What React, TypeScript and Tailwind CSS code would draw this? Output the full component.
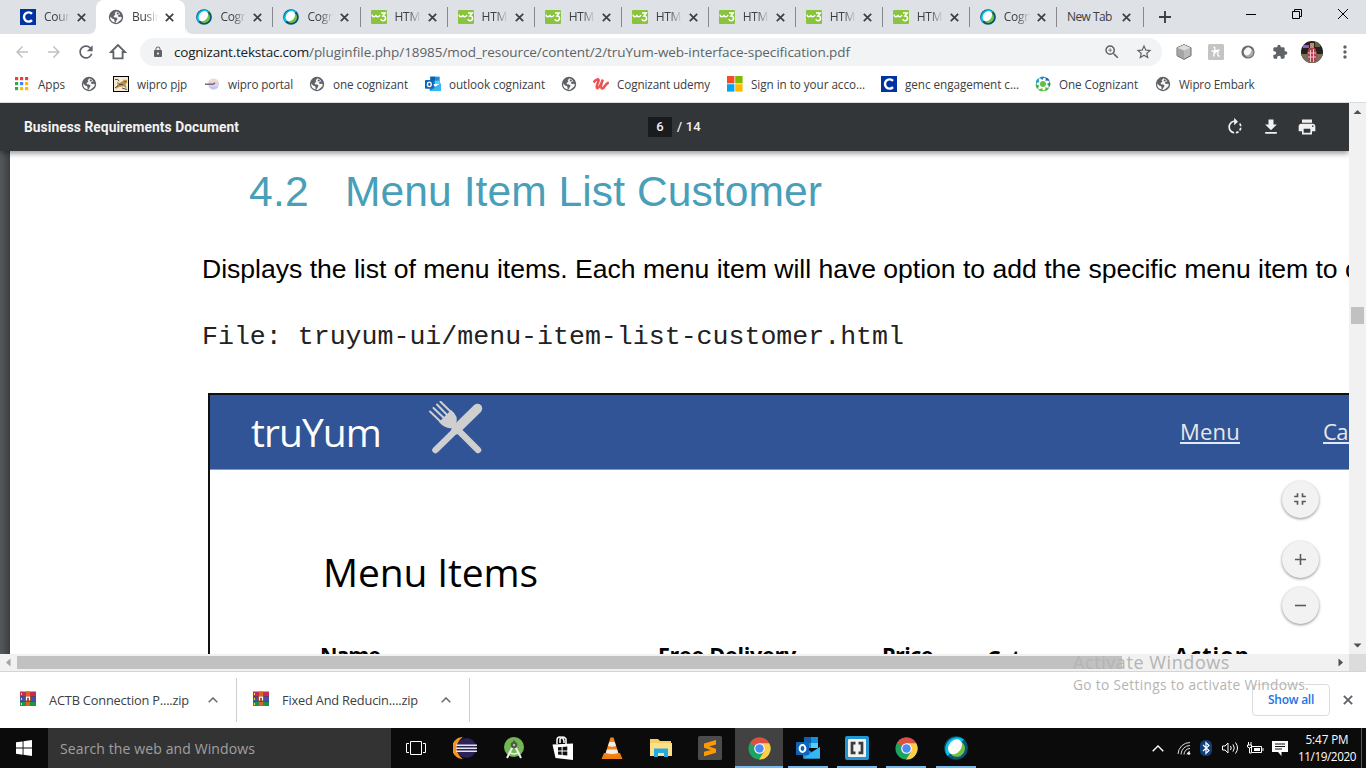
import React, { useLayoutEffect, useRef, useState } from "react";
import {
  MdAdd,
  MdArrowBack,
  MdArrowForward,
  MdExtension,
  MdFileDownload,
  MdFullscreenExit,
  MdLock,
  MdMoreVert,
  MdPrint,
  MdRefresh,
  MdRemove,
  MdRotateRight,
  MdStarBorder,
  MdZoomIn,
} from "react-icons/md";

/** A single line of text whose tracking is adjusted so that it spans `w` pixels. */
function Fit({ w, className = "", children }: { w: number; className?: string; children: string }) {
  const ref = useRef<HTMLSpanElement>(null);
  const [spacing, setSpacing] = useState(0);
  useLayoutEffect(() => {
    if (ref.current) setSpacing((w - ref.current.getBoundingClientRect().width) / children.length);
  }, []);
  return (
    <span ref={ref} className={`inline-block whitespace-pre ${className}`} style={{ letterSpacing: `${spacing}px` }}>
      {children}
    </span>
  );
}

const CIcon = () => (
  <svg viewBox="0 0 16 16" className="size-4">
    <rect width="16" height="16" fill="#0033a0" />
    <path d="M12 4.9A4.6 4.6 0 1 0 12 11.1" fill="none" stroke="#fff" strokeWidth="2.4" />
  </svg>
);

const Globe = () => (
  <svg viewBox="0 0 16 16" className="size-4">
    <circle cx="8" cy="8" r="7.2" fill="#5f6368" />
    <path d="M8.6 2.3 6.6 4.2 7.4 5.4 5.8 6.9 5.7 8.3 8.3 8.5 9.6 9.8 8.4 11.8 7.2 13.9 9.4 13.7 13.2 10.4 13.9 8.4 12.7 7.7 11 8.1 9.8 6.9 10.6 5.8 12.4 5.6 11.4 3.9Z" fill="#fff" opacity=".95" />
    <path d="M2.1 7.6 4.1 9.4 6.3 10.5 6.7 13.6A6 6 0 0 1 2.1 7.6Z" fill="#fff" />
    <path d="M9 3.2 12.4 5.4 11 5.1 9.6 5.6 8.6 5Z" fill="#5f6368" />
  </svg>
);

const Swirl = ({ className = "size-4" }: { className?: string }) => (
  <svg viewBox="0 0 24 24" className={className}>
    <circle cx="12" cy="12" r="11.8" fill="#07567a" />
    <path d="M3.5 20A11.8 11.8 0 0 1 20 3.5L12 12Z" fill="#05bfe8" />
    <ellipse cx="13" cy="12.7" rx="7.8" ry="8.3" fill="#75c043" transform="rotate(35 13 12.7)" />
    <ellipse cx="11" cy="10.7" rx="6.2" ry="8.2" fill="#fff" transform="rotate(38 11 10.7)" />
  </svg>
);

const W3 = () => (
  <svg viewBox="0 0 16 16" className="size-4">
    <rect y="1" width="16" height="14" rx="1" fill="#8ac43f" />
    <path d="M1 5.6q.4 2.4 2 2.2T4.8 6q.5 2 2 1.8T9 6" fill="none" stroke="#fff" strokeWidth="1.4" />
    <path d="M10 4h4.2l-2.3 3q2.6-.1 2.6 2.3t-2.4 2.4q-1.8 0-2.2-1.6" fill="none" stroke="#fff" strokeWidth="1.5" />
  </svg>
);

const Cross = ({ className = "size-[9px]" }: { className?: string }) => (
  <svg viewBox="0 0 9 9" className={className}>
    <path d="M.8.8 8.2 8.2M8.2.8.8 8.2" stroke="currentColor" strokeWidth="1.7" />
  </svg>
);

const Outlook = ({ className = "size-4" }: { className?: string }) => (
  <svg viewBox="0 0 24 24" className={className}>
    <path d="M8 1h14v11H8z" fill="#1490df" />
    <path d="M8 1h7v6H8z" fill="#0f5fb0" />
    <path d="M15 7h7v5h-7z" fill="#50d0f5" />
    <path d="M7 10l8.5 6L24 11v10.5q0 1-1 1H8q-1 0-1-1z" fill="#1b8fe0" />
    <path d="M7 22.5 24 11v11.5z" fill="#35b8f1" />
    <rect y="6" width="13" height="13" rx="1" fill="#0f64b8" />
    <ellipse cx="6.5" cy="12.5" rx="2.9" ry="3.4" fill="none" stroke="#fff" strokeWidth="2" />
  </svg>
);

const Tomcat = () => (
  <svg viewBox="0 0 16 16" className="size-4">
    <rect x=".5" y=".5" width="15" height="15" fill="#f4ead6" stroke="#000" />
    <path d="M4 5.5 6 7 10 5 11 3.2 12 4.4 14 3.4 14.2 6.8 12.5 8 13.6 12.5 10.5 10.2 6 11 2.5 13 4.6 9.6Z" fill="#b98f45" />
    <path d="M2 3.5 4.8 3.4 6 5.2M2 12l3-2.5M9 12l5 1.5M11.5 5.4h1.5M6 8.5h4" stroke="#514e4a" fill="none" />
  </svg>
);

const WiproPortal = () => (
  <svg viewBox="0 0 16 16" className="size-4">
    <circle cx="9.5" cy="8" r="5.5" fill="#ddd3e6" />
    <path d="M5 5.5A5.5 5.5 0 0 1 14.5 5.8Z" fill="#f3dcc8" />
    <path d="M5 11A5.5 5.5 0 0 0 14.4 10.5Z" fill="#bcc9ea" />
    <path d="M1 8.3h8l2-1.4" stroke="#77678b" strokeWidth="1.5" fill="none" />
  </svg>
);

const Udemy = () => (
  <svg viewBox="0 0 16 16" className="size-4">
    <path d="M.5 6.5Q3 3.2 5 3.2 6.3 3.5 5 6.4 2.8 11.6 4.2 12.2 6.5 12.4 9.8 3.6 7 11.8 9 12.5 10.5 12.8 11.5 10.5 13.8 7.4 15.8 6.5" fill="none" stroke="#ec5252" strokeWidth="2.5" />
  </svg>
);

const Microsoft = () => (
  <svg viewBox="0 0 16 16" className="size-4">
    <path d="M0 0h7.4v7.4H0z" fill="#f25022" />
    <path d="M8.2 0h7.4v7.4H8.2z" fill="#7fba00" />
    <path d="M0 8.2h7.4v7.4H0z" fill="#00a4ef" />
    <path d="M8.2 8.2h7.4v7.4H8.2z" fill="#ffb900" />
  </svg>
);

const OneCognizant = () => (
  <svg viewBox="0 0 16 16" className="size-4">
    <circle cx="8" cy="8" r="3" fill="#66bf3f" />
    {["#2188c9", "#1c61a8", "#1d9a87", "#4cb848", "#5cbf43", "#3fae49", "#1fa2c4"].map((c, i) => (
      <path key={c} d="M3.8 2.4Q7-1 10.6 1.6 7.8 1.6 7.2 4.2 6 2 3.8 2.4Z" fill={c} transform={`rotate(${i * 51.4} 8 8)`} />
    ))}
  </svg>
);

const Apps = () => (
  <svg viewBox="0 0 16 16" className="size-4">
    {["#ea4335", "#ea4335", "#ea4335", "#34a853", "#4285f4", "#fbbc04", "#34a853", "#fbbc04", "#fbbc04"].map((c, i) => (
      <rect key={i} x={1 + (i % 3) * 5} y={1 + Math.floor(i / 3) * 5} width="3.2" height="3.2" fill={c} />
    ))}
  </svg>
);

const Chrome = () => (
  <svg viewBox="0 0 24 24" className="size-[23px]">
    <circle cx="12" cy="12" r="11.5" fill="#1da462" />
    <path d="M12 12 2 6.3A11.5 11.5 0 0 1 22 6.3Z" fill="#dd5144" />
    <path d="M12 6.4H22.1A11.5 11.5 0 0 1 11.6 23.5L16.9 14.8Z" fill="#ffcd46" />
    <circle cx="12" cy="12" r="5.5" fill="#fff" />
    <circle cx="12" cy="12" r="4.4" fill="#4c8bf5" />
  </svg>
);

const Rar = () => (
  <svg viewBox="0 0 16 16" className="size-4">
    <path d="M0 .5h16V5H0z" fill="#c62b54" />
    <path d="M0 5.5h16V10H0z" fill="#4b4bb5" />
    <path d="M0 10.5h16V15H0z" fill="#1c9446" />
    <path d="M0 5h16v.7H0zM0 10h16v.7H0z" fill="#332a30" />
    <path d="M6 .5h4V15H6z" fill="#d9661f" />
    <path d="M5 5h6v6H5z" fill="#9b3d22" />
    <path d="M6.5 9.6V6.2h3v3.4" fill="none" stroke="#fff" strokeWidth="1.2" />
    <path d="M1 2h1v2H1zM1 7h1v2H1zM1 12h1v2H1z" fill="#ffd94a" />
  </svg>
);

const ui = "font-['Open_Sans','Noto_Sans',sans-serif]";

type Tab = { icon: "c" | "globe" | "swirl" | "w3" | "none"; title: string };
const tabs: Tab[] = [
  { icon: "c", title: "Cour" },
  { icon: "globe", title: "Busin" },
  { icon: "swirl", title: "Cogn" },
  { icon: "swirl", title: "Cogn" },
  { icon: "w3", title: "HTM" },
  { icon: "w3", title: "HTM" },
  { icon: "w3", title: "HTM" },
  { icon: "w3", title: "HTM" },
  { icon: "w3", title: "HTM" },
  { icon: "w3", title: "HTM" },
  { icon: "w3", title: "HTM" },
  { icon: "swirl", title: "Cogn" },
  { icon: "none", title: "New Tab" },
];
const tabIcons = { c: <CIcon />, globe: <Globe />, swirl: <Swirl />, w3: <W3 />, none: null };

function TabStrip() {
  return (
    <div className="flex h-[34px] bg-[#dee1e6] pl-[9px] text-[12px] text-[#3c4043]">
      {tabs.map((t, i) => (
        <div
          key={i}
          className={`relative flex h-[34px] shrink-0 items-center ${i === 1 ? "w-[89.4px] rounded-t-lg bg-white pl-3" : "w-[87.05px] pl-[11px]"}`}
        >
          {i === 1 && (
            <svg viewBox="0 0 105.4 8" className="absolute bottom-0 -left-2 h-2 w-[105.4px]">
              <path d="M0 8q8 0 8-8v8zM105.4 8q-8 0-8-8v8z" fill="#fff" />
            </svg>
          )}
          {tabIcons[t.icon]}
          <span
            className={`overflow-hidden whitespace-nowrap tracking-[-0.3px] ${
              t.icon === "none" ? "w-[47px]" : "ml-2 w-[26px] [mask-image:linear-gradient(to_right,black_50%,transparent)]"
            }`}
          >
            {t.icon === "none" ? <Fit w={45}>{t.title}</Fit> : t.title}
          </span>
          <Cross className={t.icon === "none" ? "ml-[8px] size-[9px]" : "ml-[7px] size-[9px]"} />
          {i > 1 && <span className="-mr-px ml-auto h-5 w-px bg-[#85888d]" />}
        </div>
      ))}
      <svg viewBox="0 0 12 12" className="mt-[11px] ml-4 size-3">
        <path d="M6 0v12M0 6h12" stroke="#3c4043" strokeWidth="1.9" />
      </svg>
      <div className="ml-auto flex h-7 items-center gap-[36px] pr-[18px] text-black">
        <svg viewBox="0 0 10 10" className="size-[10px]"><path d="M0 5.5h10" stroke="currentColor" /></svg>
        <svg viewBox="0 0 10 10" className="size-[10px]"><path d="M.5 2.5h7v7h-7zM2.5 2.5v-2h7v7h-2" fill="none" stroke="currentColor" /></svg>
        <svg viewBox="0 0 10 10" className="size-[10px]"><path d="M0 0 10 10M10 0 0 10" stroke="currentColor" /></svg>
      </div>
    </div>
  );
}

function AddressBar() {
  return (
    <div className="flex h-9 items-center bg-white text-[#5f6368]">
      <MdArrowBack className="ml-[13px] size-[18px] text-[#bdc1c6]" />
      <MdArrowForward className="ml-[14px] size-[18px] text-[#bdc1c6]" />
      <MdRefresh className="ml-[13px] size-5" />
      <svg viewBox="0 0 18 18" className="ml-[13px] size-[18px]">
        <path d="M9 2 2 9h2.4v6.4h9.2V9H16Z" fill="none" stroke="currentColor" strokeWidth="1.8" />
      </svg>
      <div className="ml-[13px] flex h-7 w-[1022px] items-center rounded-full bg-[#f1f3f4]">
        <MdLock className="ml-3 size-3" />
        <span className="ml-[10px] flex text-[13.5px] leading-7">
          <Fit w={135} className="text-[#202124]">cognizant.tekstac.com</Fit>
          <Fit w={541}>/pluginfile.php/18985/mod_resource/content/2/truYum-web-interface-specification.pdf</Fit>
        </span>
        <MdZoomIn className="ml-auto size-[18px]" />
        <MdStarBorder className="mr-[9px] ml-[14px] size-[18px]" />
      </div>
      <svg viewBox="0 0 16 16" className="ml-[14px] size-4">
        <path d="M8 .6 15 3.7v8L8 15.4l-7-3.7v-8z" fill="#b9bbbd" stroke="#66686b" />
        <path d="M1.4 3.8 8 6.5v8.5l-6.6-3.5z" fill="#a3a5a7" />
        <path d="M8 .8 14.6 3.7 8 6.5 1.4 3.7Z" fill="#dcdddd" />
      </svg>
      <svg viewBox="0 0 16 16" className="ml-4 size-4">
        <rect width="16" height="16" rx="1.5" fill="#c4c4c4" />
        <path d="M5.4 3.4q1.8-1 1.4 2L5.6 12.6M3.6 7.3l8-1M6.2 9.8q2.8-4 3.7-1.7-.8 4.8 1.7 3.8" fill="none" stroke="#fff" strokeWidth="1.4" />
      </svg>
      <svg viewBox="0 0 16 16" className="ml-4 size-4">
        <circle cx="8" cy="8" r="6.6" fill="#6b6d70" />
        <ellipse cx="8.7" cy="8.8" rx="4.7" ry="4.7" fill="#a8aaac" />
        <ellipse cx="7.6" cy="7.4" rx="3.3" ry="4.2" fill="#f8f8f8" transform="rotate(38 7.6 7.4)" />
      </svg>
      <MdExtension className="ml-4 size-4" />
      <svg viewBox="0 0 22 22" className="ml-[13px] size-[22px]">
        <clipPath id="avatar"><circle cx="11" cy="11" r="11" /></clipPath>
        <g clipPath="url(#avatar)">
          <path d="M0 0h22v22H0z" fill="#25211c" />
          <path d="M0 13h22v9H0z" fill="#77705a" />
          <path d="M2 4h6v3H2z" fill="#8d62c8" />
          <path d="M14 1h5v5h-5z" fill="#5c6644" />
          <path d="M8 7h6l2 5-1 9H8L6 12z" fill="#b63d51" />
          <path d="M9 2h4v5H9z" fill="#c48a76" />
          <path d="M9.5 9v12M12.5 8v13M7 12h8M7 16h8" stroke="#e9c8cc" strokeWidth="1" />
        </g>
      </svg>
      <MdMoreVert className="ml-[12px] size-5" />
    </div>
  );
}

const bookmarks: { w: string; icon: React.ReactNode; label?: string; tw?: number }[] = [
  { w: "w-[67px]", icon: <Apps />, label: "Apps", tw: 27 },
  { w: "w-[32px]", icon: <Globe /> },
  { w: "w-[91px]", icon: <Tomcat />, label: "wipro pjp", tw: 50 },
  { w: "w-[105px]", icon: <WiproPortal />, label: "wipro portal", tw: 65 },
  { w: "w-[116px]", icon: <Globe />, label: "one cognizant", tw: 75 },
  { w: "w-[136px]", icon: <Outlook />, label: "outlook cognizant", tw: 96 },
  { w: "w-[32px]", icon: <Globe /> },
  { w: "w-[134px]", icon: <Udemy />, label: "Cognizant udemy", tw: 93 },
  { w: "w-[154px]", icon: <Microsoft />, label: "Sign in to your acco...", tw: 114 },
  { w: "w-[154px]", icon: <CIcon />, label: "genc engagement c...", tw: 114 },
  { w: "w-[120px]", icon: <OneCognizant />, label: "One Cognizant", tw: 79 },
  { w: "w-[110px]", icon: <Globe />, label: "Wipro Embark", tw: 75.5 },
];

function Bookmarks() {
  return (
    <div className="flex h-[33px] items-center border-b border-[#dadce0] bg-white pb-[5px] pl-[14px] text-[11.7px] text-[#3c4043]">
      {bookmarks.map((b, i) => (
        <div key={i} className={`flex shrink-0 items-center gap-2 ${b.w}`}>
          {b.icon}
          {b.label && <Fit w={b.tw!} className="leading-4">{b.label}</Fit>}
        </div>
      ))}
    </div>
  );
}

function PdfToolbar() {
  return (
    <div className="relative z-10 flex h-12 items-center bg-[#323639] font-[Roboto,sans-serif] text-[13.8px] font-bold text-[#f1f1f1] shadow-[0_2px_6px_rgba(0,0,0,0.45)]">
      <Fit w={215} className="ml-6">Business Requirements Document</Fit>
      <div className="ml-[409px] flex items-center text-[13px]">
        <span className="h-5 w-6 bg-[#191b1d] text-center leading-5 font-medium">6</span>
        <Fit w={24} className="ml-[5px] font-medium">/ 14</Fit>
      </div>
      <div className="mr-[32px] ml-auto flex gap-[16px]">
        <MdRotateRight className="size-5" />
        <MdFileDownload className="size-5" />
        <MdPrint className="size-5" />
      </div>
    </div>
  );
}

const CrossedCutlery = () => (
  <svg viewBox="0 0 56 56" className="ml-[47px] size-14">
    <g stroke="#cfcfcf" fill="none" strokeLinecap="round">
      <path d="M7.5 49 30 27" strokeWidth="6.5" />
      <path d="M28 28.5 49.5 7.5" strokeWidth="9.5" />
      <path d="M28 27 50 49" strokeWidth="6.5" />
      <path d="M2 10.5 14 22M5.5 7 18 19M9 3.5 21 16M12.5 .8 25 13" strokeWidth="2" />
    </g>
    <path d="M11 21 23 9Q31 15 28 23 L32 27 28 34 24 27Q17 28 11 21Z" fill="#cfcfcf" />
  </svg>
);

function DocumentPage() {
  return (
    <div className="flex min-h-0 flex-1 overflow-hidden bg-[linear-gradient(to_right,#525659_0,#525659_2px,#3b3e41_10px)]">
      <div className="ml-[10px] w-[1339px] shrink-0 overflow-hidden bg-white text-black">
        <h1 className="mt-[15px] flex h-[50px] pl-[239px] font-['Liberation_Sans',sans-serif] text-[42.6px] leading-[50px] text-[#4a9fb8]">
          <Fit w={60}>4.2</Fit>
          <Fit w={477} className="ml-[36px]">Menu Item List Customer</Fit>
        </h1>
        <p className="mt-[38px] flex h-[30px] pl-[192px] font-['Liberation_Sans',sans-serif] text-[26.6px] leading-[30px] whitespace-nowrap">
          <Fit w={1143}>Displays the list of menu items. Each menu item will have option to add the specific menu item to </Fit>
          cart.
        </p>
        <p className="mt-[38px] h-[30px] pl-[192px] font-['Liberation_Mono',monospace] text-[26.6px] leading-[30px] text-[#222]">
          <Fit w={702}>File: truyum-ui/menu-item-list-customer.html</Fit>
        </p>
        <div className={`mt-[41px] ml-[198px] h-[400px] w-[1300px] border-t-2 border-l-2 border-[#111] ${ui}`}>
          <div className="flex h-[75px] items-center border-b border-[#7f9acb] bg-[#305496] pl-[41px] text-white">
            <Fit w={130} className="text-[39px] leading-[50px]">truYum</Fit>
            <div className="pb-[7px]"><CrossedCutlery /></div>
            <Fit w={60} className="ml-[696px] border-b-2 border-[#e2e8f4] text-[22px] leading-[22px] text-[#e8e8e8]">Menu</Fit>
            <span className="ml-[83px] border-b-2 border-[#e2e8f4] text-[22px] leading-[22px] tracking-[-0.5px] text-[#e8e8e8]">Cart</span>
          </div>
          <h2 className="mt-[77px] h-[50px] pl-[113px] text-[39px] leading-[50px]">
            <Fit w={215}>Menu Items</Fit>
          </h2>
          <div className="mt-[46px] flex text-[21.5px] leading-6 font-bold">
            <span className="w-[338px] pl-[110px]"><Fit w={60}>Name</Fit></span>
            <span className="ml-[110px] w-[224px]"><Fit w={138}>Free Delivery</Fit></span>
            <span className="w-[105px]"><Fit w={51}>Price</Fit></span>
            <span className="w-[187px] pt-[3px]"><span className="block w-[33px] overflow-hidden tracking-[-1px]">Category</span></span>
            <Fit w={76}>Action</Fit>
          </div>
        </div>
      </div>
    </div>
  );
}

const fab = "flex size-[37px] items-center justify-center rounded-full bg-[#f2f2f2] text-[#5a5a5a] shadow-[0_1px_3px_rgba(0,0,0,0.45)]";

function Viewer() {
  return (
    <div className="flex h-[568px]">
      <div className="relative flex w-[1349px] shrink-0 flex-col overflow-hidden">
        <PdfToolbar />
        <DocumentPage />
        <div className="flex h-[17px] items-center bg-[#f1f1f1]">
          <svg viewBox="0 0 17 17" className="size-[17px]"><path d="M10.5 4.5v8L6 8.5z" fill="#a3a3a3" /></svg>
          <div className="h-[13px] w-[1105px] bg-[#c1c1c1]" />
          <svg viewBox="0 0 17 17" className="ml-auto size-[17px]"><path d="M6.5 4.5v8L11 8.5z" fill="#505050" /></svg>
        </div>
        <div className="absolute top-[377.5px] left-[1281.5px] flex flex-col">
          <div className={fab}><MdFullscreenExit className="size-5" /></div>
          <div className={`mt-[23px] ${fab}`}><MdAdd className="size-[19px]" /></div>
          <div className={`mt-[9px] ${fab}`}><MdRemove className="size-[19px]" /></div>
        </div>
      </div>
      <div className="flex w-[17px] flex-col items-center bg-[#f1f1f1]">
        <svg viewBox="0 0 17 17" className="size-[17px]"><path d="M4.5 11h8L8.5 7z" fill="#505050" /></svg>
        <div className="mt-[187px] h-[17px] w-[13px] bg-[#c1c1c1]" />
        <svg viewBox="0 0 17 17" className="mt-auto size-[17px]"><path d="M4.5 6.5h8L8.5 10.5z" fill="#505050" /></svg>
        <div className="h-[17px] w-[17px] bg-[#dcdcdc]" />
      </div>
    </div>
  );
}

function Downloads() {
  const files = [
    { name: "ACTB Connection P....zip", w: 140, box: "w-[237px]" },
    { name: "Fixed And Reducin....zip", w: 136, box: "w-[233px]" },
  ];
  return (
    <div className="relative flex h-[57px] items-center border-t border-[#d5d5d5] bg-white text-[12.8px] text-[#3c4043]">
      {files.map((f, i) => (
        <div key={f.name} className={`flex h-11 items-center border-r border-[#cfcfcf] ${f.box} ${i ? "pl-4" : "pl-5"}`}>
          <div className="-mt-[3px]"><Rar /></div>
          <Fit w={f.w} className="mt-px ml-[13px]">{f.name}</Fit>
          <svg viewBox="0 0 10 6" className="mr-[18px] ml-auto h-[6px] w-[10px]"><path d="M.7 5.3 5 1 9.3 5.3" fill="none" stroke="#6b6e72" strokeWidth="1.6" /></svg>
        </div>
      ))}
      <div className="absolute -top-[22px] left-[1073px] flex flex-col text-[#b4b4b4]">
        <Fit w={157} className="self-start text-[18px] leading-6">Activate Windows</Fit>
        <Fit w={236} className="self-start text-[13.7px] leading-[21px]">Go to Settings to activate Windows.</Fit>
      </div>
      <div className="ml-auto flex h-8 w-[78px] items-center justify-center rounded border border-[#dadce0] text-[12px] text-[#1a73e8]">
        <Fit w={46} className="font-semibold">Show all</Fit>
      </div>
      <div className="mr-[13px] ml-[13px] text-[#5f6368]"><Cross className="size-[10px]" /></div>
    </div>
  );
}

const Eclipse = () => (
  <svg viewBox="0 0 24 24" className="size-6">
    <path d="M10 1A11 11 0 0 0 10 23 13 13 0 0 1 10 1Z" fill="#f7941e" />
    <circle cx="13.5" cy="12" r="10" fill="#2c2255" />
    <path d="M3 9.3h21M3 12.3h21M3 15.3h21" stroke="#e5e2f2" strokeWidth="1.5" />
  </svg>
);
const AndroidStudio = () => (
  <svg viewBox="0 0 24 24" className="size-6">
    <circle cx="12" cy="11" r="10" fill="#74b653" />
    <path d="M11 10 5 22M13 10l6 12" stroke="#eee" strokeWidth="2" />
    <path d="M7 16q5 4 10 0" stroke="#eee" fill="none" strokeWidth="1.5" />
    <circle cx="12" cy="9" r="3.3" fill="#4a5c4d" /><circle cx="12" cy="9" r="1.2" fill="#a9c79c" />
    <path d="M12 4.5v3" stroke="#4a5c4d" strokeWidth="2" />
  </svg>
);
const Store = () => (
  <svg viewBox="0 0 24 24" className="size-6">
    <path d="M6 8V4q0-3 3-3t4 4V7M9 7V3q3-4 6 0v5" fill="none" stroke="#fff" strokeWidth="1.5" />
    <path d="M1.5 8.5 22 7.5V24L4.5 22Z" fill="#fff" />
    <path d="M7 11.3 10.6 11v3.6H7zM11.6 11l4.7-.4v4h-4.7zM7 15.6h3.6V19L7 18.6zM11.6 15.6h4.7v4l-4.7-.5z" fill="#111" />
  </svg>
);
const Vlc = () => (
  <svg viewBox="0 0 24 24" className="size-6">
    <path d="M4 17h16l2.5 6h-21z" fill="#ef7d0a" />
    <path d="M10.5 1.5h3L19 19q-7 3-14 0z" fill="#f58414" />
    <path d="M9.3 6h5.4l1.3 4q-4 1.3-8 0zM6.9 13.5h10.2l1.1 3.5q-6 2-12.4 0z" fill="#eee" />
  </svg>
);
const Explorer = () => (
  <svg viewBox="0 0 24 24" className="size-6">
    <path d="M1 3h8l2 2h11v15H1z" fill="#f6cf60" />
    <path d="M1 7h22v13H1z" fill="#fde08b" />
    <path d="M5 12.5h14V21h-4v-4H9v4H5z" fill="#26a9e0" />
  </svg>
);
const Sublime = () => (
  <svg viewBox="0 0 24 24" className="size-6">
    <rect width="24" height="24" rx="1.5" fill="#4b4b4b" />
    <path d="M6 7.5 18 4v4.5L11 10.4 18 12.8v4L6 20.2v-4.4L12.8 14 6 11.8z" fill="#ff9800" />
  </svg>
);
const Brackets = () => (
  <svg viewBox="0 0 24 24" className="size-6">
    <rect width="24" height="24" rx="2" fill="#2296d2" /><rect x="3" y="3" width="18" height="18" rx="1" fill="#f3f3f3" />
    <path d="M10.5 7.2H7v9.6h3.5M13.5 7.2H17v9.6h-3.5" fill="none" stroke="#3b3b3b" strokeWidth="2.7" />
  </svg>
);
const TaskView = () => (
  <svg viewBox="0 0 20 14" className="h-[14px] w-5">
    <path d="M4.5.5h11v13h-11zM3 2.5H.5v9H3M17 2.5h2.5v9H17" fill="none" stroke="#fff" />
  </svg>
);

const taskItems: { icon: React.ReactNode; state?: "open" | "active" }[] = [
  { icon: <TaskView /> },
  { icon: <Eclipse /> },
  { icon: <AndroidStudio /> },
  { icon: <Store /> },
  { icon: <Vlc /> },
  { icon: <Explorer /> },
  { icon: <Sublime /> },
  { icon: <Chrome />, state: "active" },
  { icon: <Outlook className="size-6" />, state: "open" },
  { icon: <Brackets />, state: "open" },
  { icon: <Chrome />, state: "open" },
  { icon: <Swirl className="size-6" />, state: "open" },
];

function Taskbar() {
  return (
    <div className="flex h-10 bg-[#0b0b0b] text-white">
      <div className="flex w-12 items-center justify-center">
        <svg viewBox="0 0 16 16" className="size-4">
          <path d="M0 2.3 6.6 1.4v6.2H0zM7.5 1.2 16 0v7.6H7.5zM0 8.5h6.6v6.2L0 13.8zM7.5 8.5H16V16l-8.5-1.2z" fill="#fff" />
        </svg>
      </div>
      <div className="flex w-[343px] items-center bg-[#333] pl-3 text-[14px] text-[#a0a0a0]">
        <Fit w={195}>Search the web and Windows</Fit>
      </div>
      {taskItems.map((t, i) => (
        <div key={i} className="flex w-[49.1px] shrink-0 justify-center">
          <div
            className={`flex h-10 items-center justify-center ${
              t.state === "active" ? "w-12 border-b-2 border-[#76b9ed] bg-[#424242] pt-[2px]" : t.state === "open" ? "w-10 border-b-2 border-[#76b9ed] pt-[2px]" : "w-10"
            }`}
          >
            {t.icon}
          </div>
        </div>
      ))}
      <div className="ml-auto flex items-center">
        <svg viewBox="0 0 12 7" className="h-[7px] w-3"><path d="M.7 6.3 6 1l5.3 5.3" fill="none" stroke="#fff" strokeWidth="1.4" /></svg>
        <svg viewBox="0 0 14 14" className="ml-[13px] size-[14px]">
          <g fill="none" stroke="#ddd"><path d="M1 13A12 12 0 0 1 13 1.5M4 13.5A9 9 0 0 1 13 4.5M7 13.5A6 6 0 0 1 13 7.5M10 13.5A3.5 3.5 0 0 1 13 10.5" /></g>
          <circle cx="12" cy="12.5" r="1.3" fill="#fff" />
        </svg>
        <svg viewBox="0 0 12 16" className="ml-[9px] h-4 w-3">
          <rect width="12" height="16" rx="5.5" fill="#0e3f78" />
          <path d="M3 5l6 5.5-3 2.8V2.7l3 2.8L3 11" fill="none" stroke="#fff" strokeWidth="1.2" />
        </svg>
        <svg viewBox="0 0 17 14" className="ml-[10px] h-[14px] w-[17px]">
          <path d="M.5 5h2.5l3-3v10l-3-3H.5zM8.5 5q1.5 2 0 4M11 3.4q2.6 3.6 0 7.2M13.5 1.5q4 5.5 0 11" fill="none" stroke="#fff" />
        </svg>
        <svg viewBox="0 0 17 12" className="ml-[8px] h-3 w-[17px]">
          <path d="M4.5 4.5h10v6h-10zM16 6v3M1.5 0v3M4 0v3M.5 3h4v2q-2 2-4 0zM2.5 6v5h2" fill="none" stroke="#fff" /><path d="M7 6h6v3H7z" fill="#fff" />
        </svg>
        <svg viewBox="0 0 16 15" className="ml-[8px] h-[15px] w-4">
          <path d="M0 0h16v11H9.5v4L6 11H0z" fill="#fff" /><path d="M3 3h10M3 5.5h10M3 8h7" stroke="#111" />
        </svg>
        <div className="ml-[9px] flex w-[60px] flex-col items-center text-[11.7px] leading-[17px]">
          <Fit w={43}>5:47 PM</Fit>
          <Fit w={58}>11/19/2020</Fit>
        </div>
        <div className="ml-[4px] h-10 w-px bg-[#555]" />
        <div className="w-[4px]" />
      </div>
    </div>
  );
}

export default function App() {
  return (
    <div className={`flex h-[768px] w-[1366px] flex-col overflow-hidden bg-white ${ui}`}>
      <TabStrip />
      <AddressBar />
      <Bookmarks />
      <Viewer />
      <Downloads />
      <Taskbar />
    </div>
  );
}
